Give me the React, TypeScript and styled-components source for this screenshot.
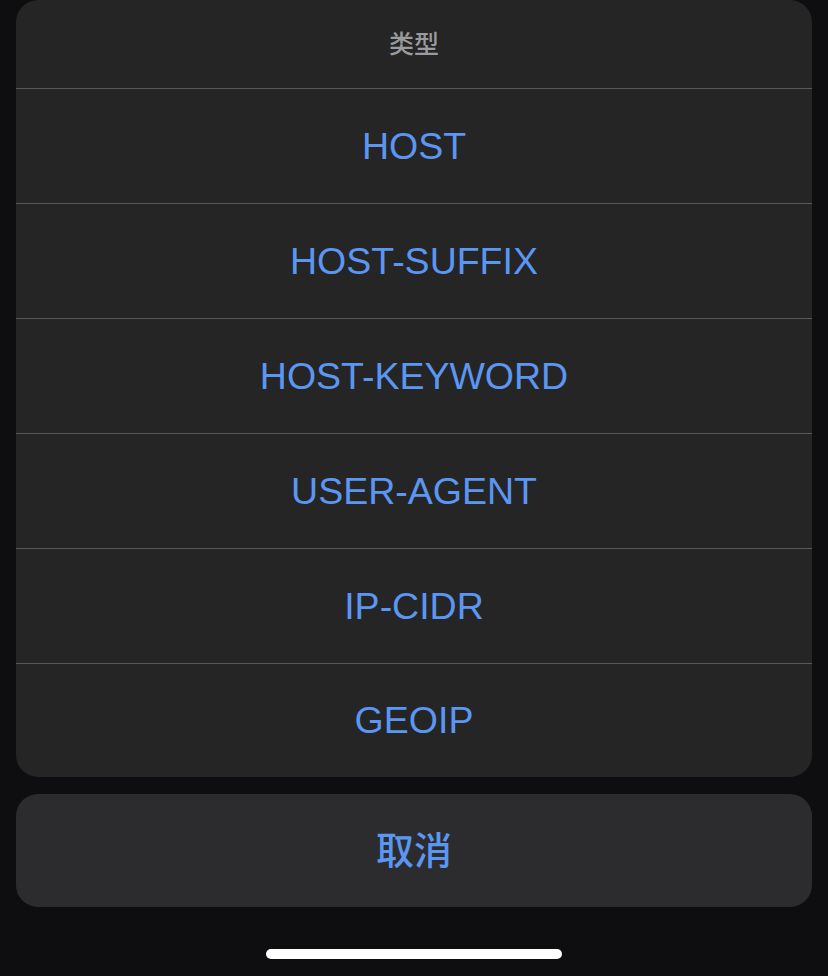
import React from "react";
import styled, { createGlobalStyle } from "styled-components";

const BLUE = "#5b96f2";

const GlobalStyle = createGlobalStyle`
  html, body {
    margin: 0;
    padding: 0;
    background: #0e0e10;
  }
  body {
    font-family: "Liberation Sans", "Noto Sans CJK SC", sans-serif;
  }
`;

const Screen = styled.div`
  width: 828px;
  height: 976px;
  background: #0e0e10;
  display: flex;
  flex-direction: column;
  align-items: center;
  box-sizing: border-box;
  padding: 0 16px;
  overflow: hidden;
`;

const Sheet = styled.div`
  width: 100%;
  background: #252525;
  border-radius: 22px;
  overflow: hidden;
  display: flex;
  flex-direction: column;
`;

const Title = styled.div`
  height: 88px;
  display: flex;
  align-items: center;
  justify-content: center;
  color: #9b9b9d;
  font-size: 25px;
  font-weight: 500;
  font-family: "Noto Sans CJK SC", sans-serif;
  padding-bottom: 4px;
  box-sizing: border-box;
`;

const Option = styled.div<{ $last?: boolean }>`
  height: ${(p) => (p.$last ? "114px" : "115px")};
  border-top: 1px solid #59595b;
  box-sizing: border-box;
  display: flex;
  align-items: center;
  justify-content: center;
  color: ${BLUE};
  font-size: 37.5px;
  cursor: pointer;
`;

const Cancel = styled.div`
  width: 100%;
  height: 113px;
  margin-top: 17px;
  background: #2c2c2e;
  border-radius: 22px;
  display: flex;
  align-items: center;
  justify-content: center;
  color: ${BLUE};
  font-family: "Noto Sans CJK SC", sans-serif;
  font-weight: 500;
  font-size: 38px;
  padding-bottom: 6px;
  box-sizing: border-box;
  cursor: pointer;
`;

const HomeBar = styled.div`
  width: 296px;
  height: 10px;
  border-radius: 5px;
  background: #ffffff;
  margin-top: 42px;
`;

const options = ["HOST", "HOST-SUFFIX", "HOST-KEYWORD", "USER-AGENT", "IP-CIDR", "GEOIP"];

const App = () => (
  <>
    <GlobalStyle />
    <Screen>
      <Sheet>
        <Title>类型</Title>
        {options.map((o, i) => (
          <Option key={o} $last={i === options.length - 1}>
            {o}
          </Option>
        ))}
      </Sheet>
      <Cancel>取消</Cancel>
      <HomeBar />
    </Screen>
  </>
);

export default App;
